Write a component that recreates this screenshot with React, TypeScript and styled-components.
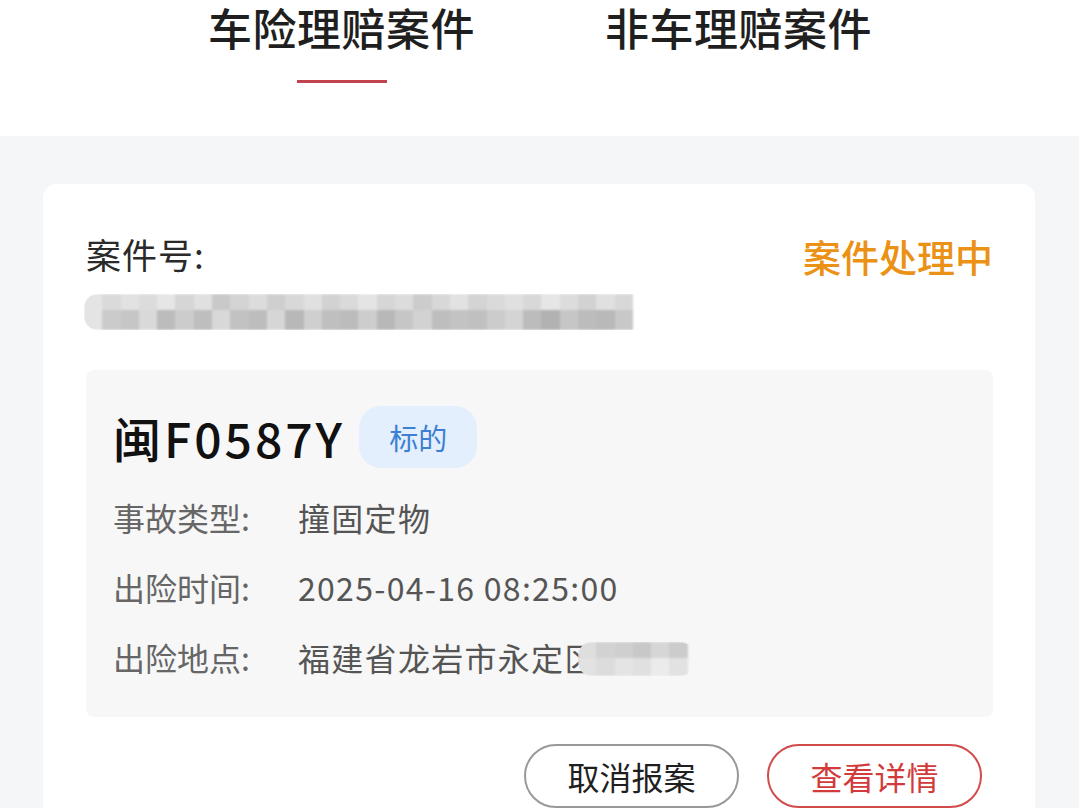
import styled, { createGlobalStyle } from "styled-components";

const GlobalStyle = createGlobalStyle`
  * { box-sizing: border-box; }
  body {
    margin: 0;
    background: #f5f6f8;
    font-family: "Noto Sans CJK SC", "Noto Sans", sans-serif;
  }
`;

const numberTop = ["#e4e4e4", "#dadada", "#e2e2e2", "#dcdcdc", "#e6e6e6", "#d6d6d6", "#e0e0e0", "#c9c9c9", "#d4d4d4", "#dcdcdc", "#cfcfcf", "#d8d8d8", "#e0e0e0", "#d2d2d2", "#dadada", "#e4e4e4", "#d6d6d6", "#dcdcdc", "#cccccc", "#d8d8d8", "#e2e2e2", "#d4d4d4", "#dadada", "#e0e0e0", "#d8d8d8", "#e6e6e6", "#dcdcdc", "#d2d2d2", "#e0e0e0", "#d8d8d8", "#e4e4e4"];
const numberBottom = ["#cbcbcb", "#c6c6c6", "#d9d9d9", "#bcbcbc", "#cccccc", "#bebebe", "#d8d8d8", "#c2c2c2", "#bdbdbd", "#d6d6d6", "#b8b8b8", "#cfcfcf", "#bfbfbf", "#bcbcbc", "#cdcdcd", "#b8b8b8", "#c6c6c6", "#d2d2d2", "#bebebe", "#c3c3c3", "#c0c0c0", "#cccccc", "#d4d4d4", "#bcbcbc", "#b2b2b2", "#c6c6c6", "#bcbcbc", "#b9b9b9", "#c8c8c8", "#d6d6d6", "#dadada"];
const addrTop = ["#dedede", "#d2d2d2", "#cfcfcf", "#c8c8c8", "#d6d6d6", "#cccccc"];
const addrBottom = ["#e2e2e2", "#dcdcdc", "#e4e4e4", "#e0e0e0", "#ebebeb", "#e2e2e2"];

const rows = [
  { label: "事故类型:", value: "撞固定物" },
  { label: "出险时间:", value: "2025-04-16 08:25:00" },
  { label: "出险地点:", value: "福建省龙岩市永定区" },
];

const Mosaic = ({ top, bottom }: { top: string[]; bottom: string[] }) => (
  <MosaicGrid>
    {top.map((c, i) => (
      <Cell key={"t" + i} style={{ background: c }} />
    ))}
    {bottom.map((c, i) => (
      <Cell key={"b" + i} style={{ background: c }} />
    ))}
  </MosaicGrid>
);

const App = () => {
  return (
    <>
      <GlobalStyle />
      <Header>
        <TabBar>
          <Tab $active>车险理赔案件</Tab>
          <Tab>非车理赔案件</Tab>
        </TabBar>
      </Header>
      <Body>
        <Card>
          <CardTop>
            <CaseLabel>案件号:</CaseLabel>
            <Status>案件处理中</Status>
          </CardTop>
          <NumberBlur>
            <Mosaic top={numberTop} bottom={numberBottom} />
          </NumberBlur>
          <InfoBox>
            <TitleRow>
              <Plate>闽F0587Y</Plate>
              <Tag>标的</Tag>
            </TitleRow>
            {rows.map((r, idx) => (
              <InfoRow key={idx}>
                <Label>{r.label}</Label>
                <Value>
                  {r.value}
                  {idx === 2 && (
                    <AddrBlur>
                      <Mosaic top={addrTop} bottom={addrBottom} />
                    </AddrBlur>
                  )}
                </Value>
              </InfoRow>
            ))}
          </InfoBox>
          <Actions>
            <ActionButton>取消报案</ActionButton>
            <ActionButton $primary>查看详情</ActionButton>
          </Actions>
        </Card>
      </Body>
    </>
  );
};

export default App;

const Header = styled.div`
  background: #fff;
  height: 136px;
`;

const TabBar = styled.div`
  display: flex;
  justify-content: center;
  gap: 130px;
  padding-left: 1px;
`;

const Tab = styled.div<{ $active?: boolean }>`
  position: relative;
  font-size: 44px;
  line-height: 54px;
  color: #1f1f1f;
  font-weight: 500;
  letter-spacing: 0.5px;
  &::after {
    content: "";
    display: ${(p) => (p.$active ? "block" : "none")};
    position: absolute;
    left: 50%;
    top: 80px;
    width: 90px;
    height: 3px;
    margin-left: -45px;
    background: #c0434f;
  }
`;

const Body = styled.div`
  padding: 48px 44px 0 43px;
`;

const Card = styled.div`
  background: #fff;
  border-radius: 14px;
  padding: 42px 42px 40px 43px;
  min-height: 700px;
`;

const CardTop = styled.div`
  display: flex;
  justify-content: space-between;
  align-items: center;
`;

const CaseLabel = styled.div`
  font-size: 35px;
  line-height: 52px;
  color: #2a2a2a;
  letter-spacing: 1px;
`;

const Status = styled.div`
  font-size: 38px;
  line-height: 52px;
  font-weight: 500;
  color: #eb9115;
  padding-top: 4px;
`;

const NumberBlur = styled.div`
  width: 566px;
  height: 36px;
  margin: 12px 0 0 -2px;
  border-radius: 14px;
  overflow: hidden;
`;

const MosaicGrid = styled.div`
  display: grid;
  grid-template-columns: repeat(auto-fill, 18.3px);
  grid-template-rows: 16px 1fr;
  width: 100%;
  height: 100%;
  filter: blur(1px);
`;

const Cell = styled.div``;

const InfoBox = styled.div`
  margin-top: 40px;
  background: #f7f7f7;
  border-radius: 8px;
  padding: 36px 27px 25px;
`;

const TitleRow = styled.div`
  display: flex;
  align-items: center;
  gap: 14px;
  margin-bottom: 14px;
`;

const Plate = styled.div`
  font-size: 48px;
  line-height: 62px;
  font-weight: 500;
  color: #111;
  letter-spacing: 3px;
`;

const Tag = styled.div`
  height: 62px;
  padding: 0 30px;
  border-radius: 22px;
  background: #e3effc;
  color: #3d7fd2;
  font-size: 29px;
  line-height: 62px;
`;

const InfoRow = styled.div`
  display: flex;
  align-items: center;
  height: 70px;
`;

const Label = styled.div`
  width: 185px;
  font-size: 32px;
  color: #666;
`;

const Value = styled.div`
  position: relative;
  font-size: 32px;
  color: #555;
  letter-spacing: 1.3px;
`;

const AddrBlur = styled.div`
  position: absolute;
  left: 280px;
  top: 8px;
  width: 116px;
  height: 34px;
  border-radius: 14px;
  overflow: hidden;
`;

const Actions = styled.div`
  display: flex;
  justify-content: flex-end;
  gap: 28px;
  margin-top: 27px;
  padding-right: 11px;
`;

const ActionButton = styled.button<{ $primary?: boolean }>`
  width: 215px;
  height: 64px;
  border-radius: 32px;
  background: #fff;
  border: 2.5px solid ${(p) => (p.$primary ? "#d24a4a" : "#999")};
  color: ${(p) => (p.$primary ? "#d23b3b" : "#1f1f1f")};
  font-family: inherit;
  font-size: 32px;
  padding: 0;
`;
